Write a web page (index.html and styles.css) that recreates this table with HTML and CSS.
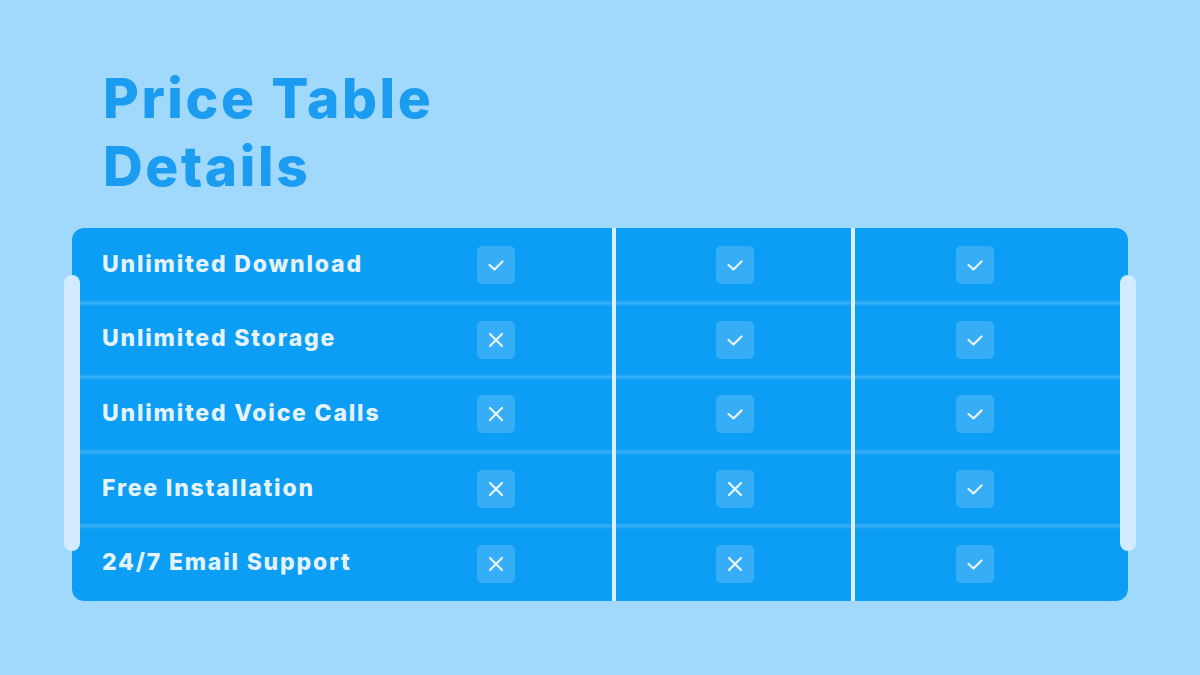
FILE: index.html
```html
<!DOCTYPE html>
<html>
<head>
<meta charset="utf-8">
<link rel="stylesheet" href="styles.css">
</head>
<body>
<div class="page">
  <h1 class="title">Price Table<br>Details</h1>
  <div class="table-wrap">
    <div class="side side-left"></div>
    <div class="side side-right"></div>
    <div class="table">
      <div class="col col-main">
        <div class="row"><span class="label">Unlimited Download</span><span class="box"><svg viewBox="0 0 38 38"><path d="M12.5 19 L17.5 23.5 L25.5 15.5"/></svg></span></div>
        <div class="row"><span class="label">Unlimited Storage</span><span class="box"><svg viewBox="0 0 38 38"><path d="M13 13 L25 25 M25 13 L13 25"/></svg></span></div>
        <div class="row"><span class="label">Unlimited Voice Calls</span><span class="box"><svg viewBox="0 0 38 38"><path d="M13 13 L25 25 M25 13 L13 25"/></svg></span></div>
        <div class="row"><span class="label">Free Installation</span><span class="box"><svg viewBox="0 0 38 38"><path d="M13 13 L25 25 M25 13 L13 25"/></svg></span></div>
        <div class="row"><span class="label">24/7 Email Support</span><span class="box"><svg viewBox="0 0 38 38"><path d="M13 13 L25 25 M25 13 L13 25"/></svg></span></div>
      </div>
      <div class="col col-mid">
        <div class="row"><span class="box"><svg viewBox="0 0 38 38"><path d="M12.5 19 L17.5 23.5 L25.5 15.5"/></svg></span></div>
        <div class="row"><span class="box"><svg viewBox="0 0 38 38"><path d="M12.5 19 L17.5 23.5 L25.5 15.5"/></svg></span></div>
        <div class="row"><span class="box"><svg viewBox="0 0 38 38"><path d="M12.5 19 L17.5 23.5 L25.5 15.5"/></svg></span></div>
        <div class="row"><span class="box"><svg viewBox="0 0 38 38"><path d="M13 13 L25 25 M25 13 L13 25"/></svg></span></div>
        <div class="row"><span class="box"><svg viewBox="0 0 38 38"><path d="M13 13 L25 25 M25 13 L13 25"/></svg></span></div>
      </div>
      <div class="col col-last">
        <div class="row"><span class="box"><svg viewBox="0 0 38 38"><path d="M12.5 19 L17.5 23.5 L25.5 15.5"/></svg></span></div>
        <div class="row"><span class="box"><svg viewBox="0 0 38 38"><path d="M12.5 19 L17.5 23.5 L25.5 15.5"/></svg></span></div>
        <div class="row"><span class="box"><svg viewBox="0 0 38 38"><path d="M12.5 19 L17.5 23.5 L25.5 15.5"/></svg></span></div>
        <div class="row"><span class="box"><svg viewBox="0 0 38 38"><path d="M12.5 19 L17.5 23.5 L25.5 15.5"/></svg></span></div>
        <div class="row"><span class="box"><svg viewBox="0 0 38 38"><path d="M12.5 19 L17.5 23.5 L25.5 15.5"/></svg></span></div>
      </div>
    </div>
  </div>
</div>
</body>
</html>
```

FILE: styles.css
```css
* { box-sizing: border-box; }
html, body {
  margin: 0;
  padding: 0;
  width: 1200px;
  height: 675px;
  overflow: hidden;
  background: #a0d9fc;
  font-family: Inter, "Noto Sans", sans-serif;
}
.page {
  padding: 64px 72px 0 72px;
}
.title {
  margin: 0 0 28px 31px;
  font-size: 55px;
  line-height: 68px;
  font-weight: 800;
  color: #1b9cf0;
  letter-spacing: 2.6px;
}
.table-wrap {
  position: relative;
  width: 1056px;
}
.table {
  display: grid;
  grid-template-columns: 540px 235px 273px;
  column-gap: 4px;
  background: #dcf0fe;
  border-radius: 12px;
  overflow: hidden;
}
.col {
  display: flex;
  flex-direction: column;
}
.row {
  height: 74.6px;
  display: flex;
  align-items: center;
  background: linear-gradient(to bottom, #3aaff7 0, #0c9df5 3.5px, #0c9df5 calc(100% - 3.5px), #3aaff7 100%);
}
.row:first-child {
  background: linear-gradient(to bottom, #0c9df5 0, #0c9df5 calc(100% - 3.5px), #3aaff7 100%);
}
.row:last-child {
  background: linear-gradient(to bottom, #3aaff7 0, #0c9df5 3.5px, #0c9df5 100%);
}
.col-main .row { padding-left: 30px; }
.col-mid .row { padding-left: 100px; }
.col-last .row { padding-left: 101px; }
.label {
  width: 375px;
  padding-bottom: 3px;
  color: #e4f3fe;
  font-weight: 800;
  font-size: 23px;
  letter-spacing: 1.8px;
}
.box {
  width: 38px;
  height: 38px;
  border-radius: 5px;
  background: #35adf7;
  display: block;
}
.box svg {
  width: 38px;
  height: 38px;
  display: block;
  fill: none;
  stroke: #eaf6ff;
  stroke-width: 2.2;
  stroke-linecap: round;
  stroke-linejoin: round;
}
.side {
  position: absolute;
  top: 47px;
  width: 16px;
  height: 276px;
  border-radius: 8px;
  background: #d2ecfd;
  z-index: 2;
}
.side-left { left: -8px; }
.side-right { right: -8px; }
```
